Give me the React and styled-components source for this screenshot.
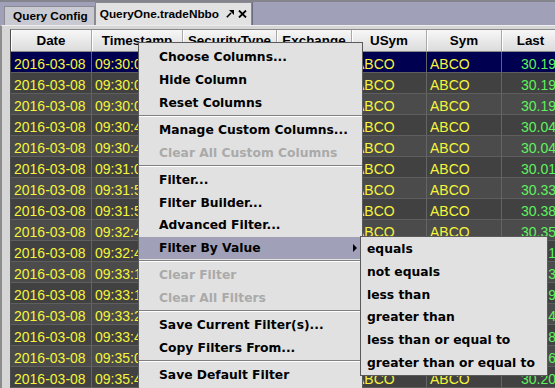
import React from 'react';
import styled, { createGlobalStyle } from 'styled-components';

const GlobalStyle = createGlobalStyle`
  html, body {
    margin: 0;
    padding: 0;
    background: #d6d6d6;
    overflow: hidden;
  }
`;

const COLS = '81px 91px 94px 75px 75px 75px 58px';

const Window = styled.div`
  position: relative;
  width: 555px;
  height: 388px;
  overflow: hidden;
  display: flex;
  flex-direction: column;
  font-family: 'Liberation Sans', Arial, sans-serif;
`;

// Tab strip
const TabBar = styled.div`
  height: 25px;
  box-sizing: border-box;
  background: #a0a0b8;
  border-top: 2px solid #84848c;
  display: flex;
  align-items: flex-end;
  padding-left: 4px;
`;

const Tab = styled.div`
  box-sizing: border-box;
  height: ${({ $active }) => ($active ? '23px' : '19px')};
  display: flex;
  align-items: center;
  gap: 7px;
  padding: ${({ $active }) => ($active ? '0 4px 0 4px' : '0 6px 0 8px')};
  background: ${({ $active }) => ($active ? '#e2e2e2' : '#c9c9d1')};
  border: 1px solid #8a8a92;
  border-bottom: none;
  box-shadow: ${({ $active }) => ($active ? '1px 0 0 #6c6c80' : 'none')};
  font-weight: bold;
  font-size: 11.8px;
  color: #000;
  white-space: nowrap;
`;

const TabIcons = styled.span`
  display: flex;
  align-items: center;
  gap: 4px;
`;

// Table area
const Panel = styled.div`
  flex: 1;
  min-height: 0;
  background: #d6d6d6;
  border-top: 1px solid #eeeeee;
  border-left: 2px solid #8c8c8c;
  padding: 3px 0 0 8px;
  overflow: hidden;
`;

const Table = styled.div`
  border-top: 1px solid #8a8a8a;
  border-left: 1px solid #4c4c4c;
  width: max-content;
`;

const HeaderRow = styled.div`
  display: grid;
  grid-template-columns: ${COLS};
  height: 22px;
  background: linear-gradient(#f7f7f7, #dadada);
`;

const HeaderCell = styled.div`
  box-sizing: border-box;
  border-right: 1px solid #a8a8a8;
  border-bottom: 1px solid #8a8a8a;
  box-shadow: inset 1px 0 0 #ffffff;
  text-align: center;
  font-weight: bold;
  font-size: 13.4px;
  line-height: 22px;
  color: #000;
  white-space: nowrap;
  overflow: hidden;
`;

const Row = styled.div`
  display: grid;
  grid-template-columns: ${COLS};
  height: 21px;
  background: ${({ $selected, $odd }) =>
    $selected ? '#000050' : $odd ? '#414141' : '#4b4b4b'};
`;

const Cell = styled.div`
  box-sizing: border-box;
  border-right: 1px solid #656565;
  border-bottom: 1px solid #5e5e5e;
  padding: 4px 3px 0;
  font-size: 14px;
  line-height: 16px;
  color: ${({ $green }) => ($green ? '#5ef25e' : '#f4f43c')};
  text-align: ${({ $right }) => ($right ? 'right' : 'left')};
  white-space: nowrap;
  overflow: hidden;
`;

// Popup menus
const Menu = styled.div`
  position: absolute;
  left: ${({ $x }) => $x}px;
  top: ${({ $y }) => $y}px;
  width: ${({ $w }) => $w}px;
  box-sizing: border-box;
  background: #e1e1e1;
  border: 1px solid #5a5a5a;
  padding: ${({ $pad }) => $pad};
  font-family: 'DejaVu Sans', Verdana, sans-serif;
  font-weight: bold;
  font-size: 12.3px;
`;

const MenuItem = styled.div`
  height: 22.7px;
  display: flex;
  align-items: center;
  justify-content: space-between;
  padding: 0 5px 0 ${({ $indent }) => $indent}px;
  color: ${({ $disabled }) => ($disabled ? '#aaaaaa' : '#000000')};
  background: ${({ $active }) => ($active ? '#a0a0b8' : 'transparent')};
  white-space: nowrap;
`;

const Separator = styled.div`
  height: 4.6px;
  box-sizing: border-box;
  padding-top: 1px;

  &::before {
    content: '';
    display: block;
    height: 1px;
    background: #808080;
    border-bottom: 1px solid #ffffff;
  }
`;

const FloatIcon = () => (
  <svg width="8" height="8" viewBox="0 0 8 8">
    <polygon points="3,0 8,0 8,5" fill="#000" />
    <line x1="0.8" y1="7.2" x2="5" y2="3" stroke="#000" strokeWidth="1.6" />
  </svg>
);

const CloseIcon = () => (
  <svg width="9" height="8" viewBox="0 0 9 8">
    <path d="M1 0.5 L8 7.5 M8 0.5 L1 7.5" stroke="#000" strokeWidth="1.8" />
  </svg>
);

const SubArrow = () => (
  <svg width="4" height="8" viewBox="0 0 4 8">
    <polygon points="0,0 4,4 0,8" fill="#000" />
  </svg>
);

const headers = ['Date', 'Timestamp', 'SecurityType', 'Exchange', 'USym', 'Sym', 'Last'];

const times = [
  '09:30:00.412', '09:30:01.207', '09:30:02.950', '09:30:41.118', '09:30:45.632',
  '09:31:02.774', '09:31:50.301', '09:31:57.845', '09:32:40.093', '09:32:46.512',
  '09:33:10.220', '09:33:14.687', '09:33:25.431', '09:33:41.908', '09:35:03.156',
  '09:35:44.770',
];

const lasts = [
  '30.19', '30.19', '30.19', '30.04', '30.04', '30.01', '30.33', '30.38',
  '30.35', '30.31', '30.23', '30.29', '30.24', '30.28', '30.26', '30.20',
];

const menu = [
  { label: 'Choose Columns...' },
  { label: 'Hide Column' },
  { label: 'Reset Columns' },
  { sep: true },
  { label: 'Manage Custom Columns...' },
  { label: 'Clear All Custom Columns', disabled: true },
  { sep: true },
  { label: 'Filter...' },
  { label: 'Filter Builder...' },
  { label: 'Advanced Filter...' },
  { label: 'Filter By Value', active: true, sub: true },
  { sep: true },
  { label: 'Clear Filter', disabled: true },
  { label: 'Clear All Filters', disabled: true },
  { sep: true },
  { label: 'Save Current Filter(s)...' },
  { label: 'Copy Filters From...' },
  { sep: true },
  { label: 'Save Default Filter' },
];

const subMenu = [
  'equals',
  'not equals',
  'less than',
  'greater than',
  'less than or equal to',
  'greater than or equal to',
];

const App = () => (
  <Window>
    <GlobalStyle />
    <TabBar>
      <Tab>Query Config</Tab>
      <Tab $active>
        QueryOne.tradeNbbo
        <TabIcons>
          <FloatIcon />
          <CloseIcon />
        </TabIcons>
      </Tab>
    </TabBar>

    <Panel>
      <Table>
        <HeaderRow>
          {headers.map((h) => (
            <HeaderCell key={h}>{h}</HeaderCell>
          ))}
        </HeaderRow>
        {times.map((t, i) => (
          <Row key={t} $selected={i === 0} $odd={i % 2 === 1}>
            <Cell>2016-03-08</Cell>
            <Cell>{t}</Cell>
            <Cell>STOCK</Cell>
            <Cell>NYSE</Cell>
            <Cell>ABCO</Cell>
            <Cell>ABCO</Cell>
            <Cell $green $right>{lasts[i]}</Cell>
          </Row>
        ))}
      </Table>
    </Panel>

    <Menu $x={138} $y={42} $w={225} $pad="3px 0 6px">
      {menu.map((m, i) =>
        m.sep ? (
          <Separator key={i} />
        ) : (
          <MenuItem key={i} $indent={20} $disabled={m.disabled} $active={m.active}>
            {m.label}
            {m.sub && <SubArrow />}
          </MenuItem>
        )
      )}
    </Menu>

    <Menu $x={360} $y={236} $w={188} $pad="1px 0">
      {subMenu.map((s) => (
        <MenuItem key={s} $indent={6}>
          {s}
        </MenuItem>
      ))}
    </Menu>
  </Window>
);

export default App;
